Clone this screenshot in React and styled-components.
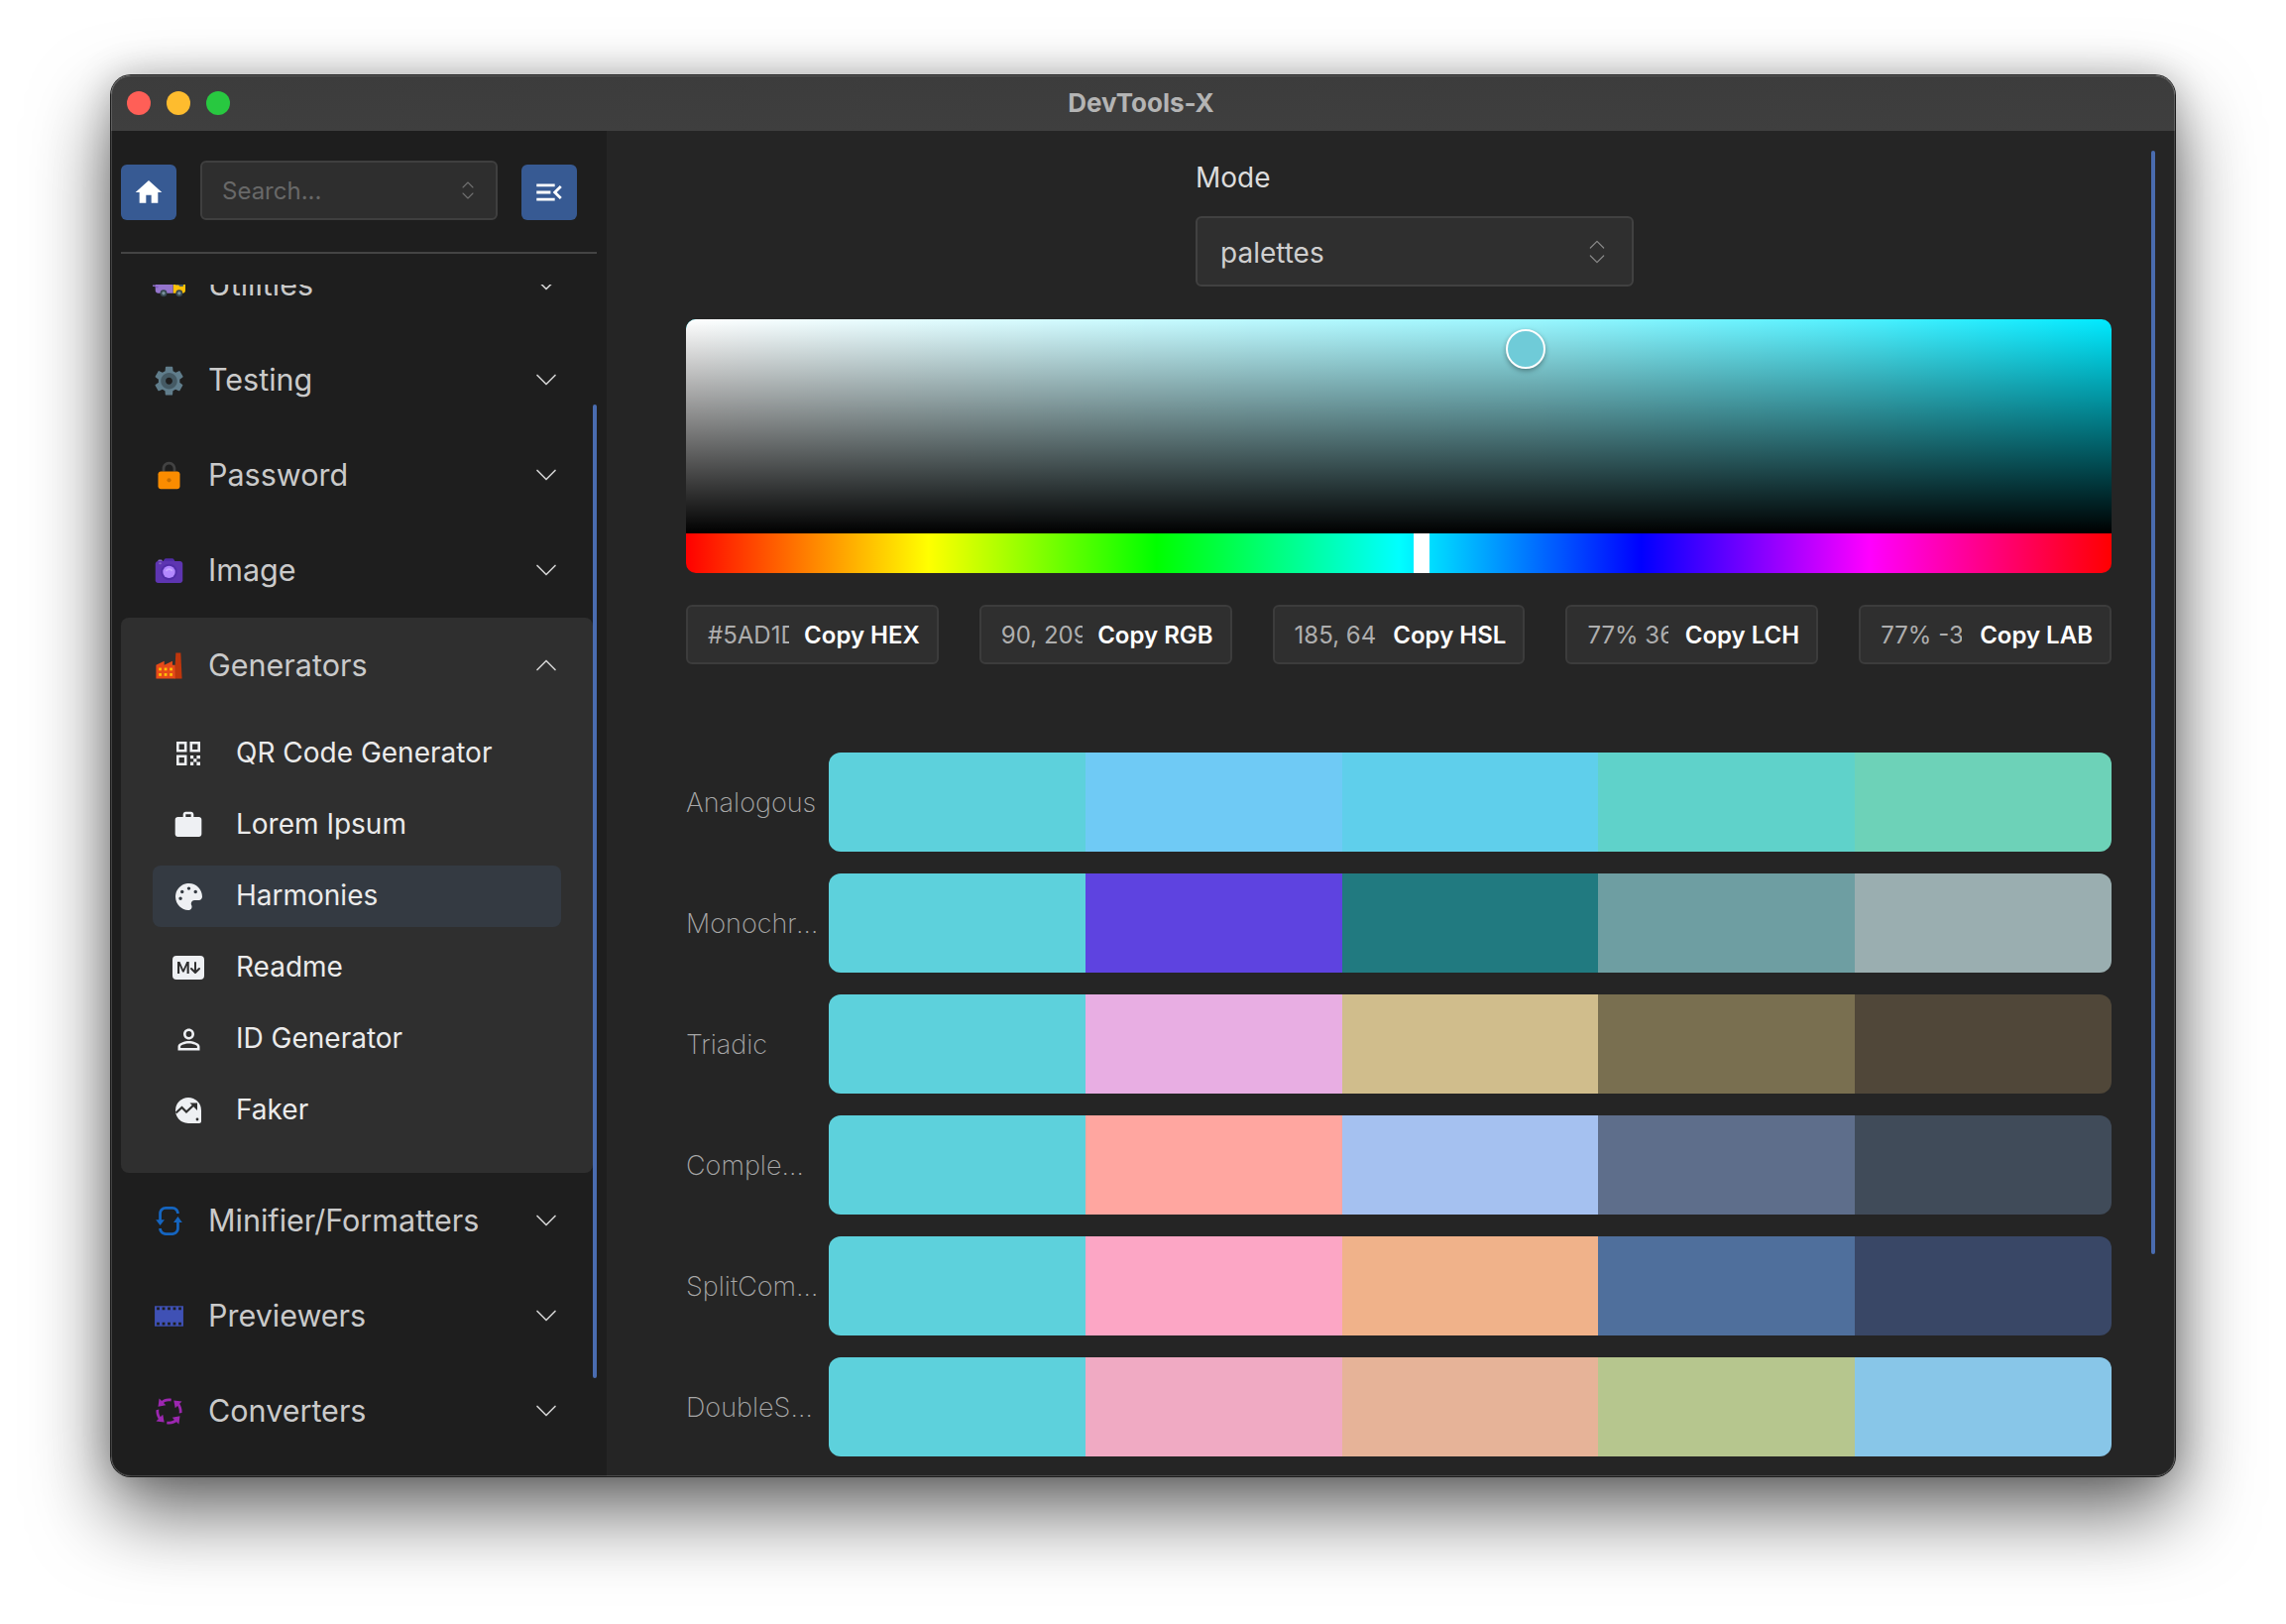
import React from "react";
import styled, { createGlobalStyle } from "styled-components";
import {
  FcInTransit,
  FcSettings,
  FcLock,
  FcCamera,
  FcFactory,
  FcRefresh,
  FcFilm,
  FcProcess,
} from "react-icons/fc";
import { MdHome, MdMenuOpen, MdWork, MdOutlinePersonOutline } from "react-icons/md";
import { FaPalette } from "react-icons/fa";
import { BsMarkdownFill } from "react-icons/bs";
import { ChevronDown, ChevronUp, ChevronsUpDown } from "lucide-react";

const GlobalStyle = createGlobalStyle`
  html, body {
    margin: 0;
    background: #fff;
    font-family: Inter, "Liberation Sans", sans-serif;
  }
  * {
    box-sizing: border-box;
  }
`;

const sections = [
  { name: "Utilities", icon: <FcInTransit /> },
  { name: "Testing", icon: <FcSettings /> },
  { name: "Password", icon: <FcLock /> },
  { name: "Image", icon: <FcCamera /> },
];

const lowerSections = [
  { name: "Minifier/Formatters", icon: <FcRefresh /> },
  { name: "Previewers", icon: <FcFilm /> },
  { name: "Converters", icon: <FcProcess /> },
];

const QrIcon = () => (
  <svg viewBox="0 0 24 24" width="24" height="24" fill="currentColor">
    <path fillRule="evenodd" d="M0 0h10.500v10.500H0zM2.600 2.600v5.300h5.300V2.600z" />
    <path fillRule="evenodd" d="M13.500 0H24v10.500H13.500zM16.100 2.600v5.300h5.300V2.600z" />
    <path fillRule="evenodd" d="M0 13.500h10.500V24H0zM2.600 16.100v5.300h5.300v-5.300z" />
    <path d="M14 14h3.200v3.200H14zM20.400 14H24v3.200h-3.600zM17.200 17.200h3.200v3.200h-3.200zM14 20.400h3.200V24H14zM20.400 20.400H24V24h-3.600z" />
  </svg>
);

const FakerIcon = () => (
  <svg viewBox="0 0 28 28" width="28" height="28">
    <path
      fill="currentColor"
      d="M14 1a13 13 0 0 0-13 13c0 5 2.800 9.400 7 11.600 1.800.9 3.800 1.400 6 1.400h11c1 0 2-.9 2-2V14A13 13 0 0 0 14 1z"
    />
    <path
      fill="none"
      stroke="#2f2f2f"
      strokeWidth="2.200"
      d="M1.500 16.500 7.500 11l4.500 4.500 8-7.500"
    />
    <path fill="#2f2f2f" d="M15.500 6.500h7.500V14z" />
    <circle cx="23" cy="23" r="1.400" fill="#2f2f2f" />
  </svg>
);

const generators = [
  { name: "QR Code Generator", icon: <QrIcon /> },
  { name: "Lorem Ipsum", icon: <MdWork size={32} /> },
  { name: "Harmonies", icon: <FaPalette size={27} />, active: true },
  { name: "Readme", icon: <BsMarkdownFill size={32} /> },
  { name: "ID Generator", icon: <MdOutlinePersonOutline size={33} /> },
  { name: "Faker", icon: <FakerIcon /> },
];

const values = [
  { value: "#5AD1DC", label: "Copy HEX" },
  { value: "90, 209, 220", label: "Copy RGB" },
  { value: "185, 64, 61", label: "Copy HSL" },
  { value: "77% 36 203", label: "Copy LCH" },
  { value: "77% -3 -24", label: "Copy LAB" },
];

const palettes = [
  { name: "Analogous", colors: ["#5dd1dc", "#6fcaf5", "#5fcfeb", "#5fd2ca", "#6dd2b8"] },
  { name: "Monochromatic", colors: ["#5dd1dc", "#5e43e0", "#217a80", "#6e9ea2", "#9aaeb0"] },
  { name: "Triadic", colors: ["#5dd1dc", "#e8aee3", "#d0bd8c", "#796f50", "#504739"] },
  { name: "Complementary", colors: ["#5dd1dc", "#ffa6a0", "#a5c1f0", "#5e6e8b", "#404b59"] },
  { name: "SplitComplementary", colors: ["#5dd1dc", "#fca6c5", "#f0b28a", "#4f6f9c", "#394766"] },
  { name: "DoubleSplitComplementary", colors: ["#5dd1dc", "#f0aac3", "#e6b398", "#b6c68e", "#88c6e8"] },
];

const SectionRow = ({ name, icon, open }) => (
  <Section>
    <SectionIcon>{icon}</SectionIcon>
    <SectionName>{name}</SectionName>
    <Chevron>{open ? <ChevronUp size={36} strokeWidth={1.1} /> : <ChevronDown size={36} strokeWidth={1.1} />}</Chevron>
  </Section>
);

export default function App() {
  return (
    <>
      <GlobalStyle />
      <Page>
        <Window>
          <TitleBar>
            <Lights>
              <Light $color="#ff5f57" />
              <Light $color="#febc2e" />
              <Light $color="#28c840" />
            </Lights>
            <Title>DevTools-X</Title>
          </TitleBar>
          <Body>
            <Sidebar>
              <Toolbar>
                <IconButton>
                  <MdHome size={32} />
                </IconButton>
                <SearchBox>
                  <SearchText>Search...</SearchText>
                  <ChevronsUpDown size={24} strokeWidth={1.1} />
                </SearchBox>
                <IconButton>
                  <MdMenuOpen size={34} />
                </IconButton>
              </Toolbar>
              <Divider />
              <NavClip>
                <NavList>
                  {sections.map((s) => (
                    <SectionRow key={s.name} {...s} />
                  ))}
                  <OpenPanel>
                    <SectionRow name="Generators" icon={<FcFactory />} open />
                    <SubList>
                      {generators.map((g) => (
                        <SubItem key={g.name} $active={g.active}>
                          <SubIcon>{g.icon}</SubIcon>
                          {g.name}
                        </SubItem>
                      ))}
                    </SubList>
                  </OpenPanel>
                  {lowerSections.map((s) => (
                    <SectionRow key={s.name} {...s} />
                  ))}
                </NavList>
              </NavClip>
              <SideThumb />
            </Sidebar>
            <Main>
              <ModeField>
                <ModeLabel>Mode</ModeLabel>
                <ModeSelect>
                  <ModeValue>palettes</ModeValue>
                  <ChevronsUpDown size={32} strokeWidth={0.9} />
                </ModeSelect>
              </ModeField>
              <Picker>
                <Saturation>
                  <SatThumb />
                </Saturation>
                <Hue>
                  <HueThumb />
                </Hue>
              </Picker>
              <ValueRow>
                {values.map((v) => (
                  <ValueBox key={v.label}>
                    <ValueInput>{v.value}</ValueInput>
                    <CopyLabel>{v.label}</CopyLabel>
                  </ValueBox>
                ))}
              </ValueRow>
              <PaletteList>
                {palettes.map((p) => (
                  <PaletteRow key={p.name}>
                    <PaletteName>{p.name}</PaletteName>
                    <Swatches>
                      {p.colors.map((c, i) => (
                        <Swatch key={i} $color={c} />
                      ))}
                    </Swatches>
                  </PaletteRow>
                ))}
              </PaletteList>
              <MainThumb />
            </Main>
          </Body>
        </Window>
      </Page>
    </>
  );
}

const Page = styled.div`
  width: 2306px;
  height: 1638px;
  padding: 76px 112px 0;
  background: #fff;
  overflow: hidden;
`;

const Window = styled.div`
  position: relative;
  width: 2082px;
  height: 1413px;
  display: flex;
  flex-direction: column;
  border-radius: 20px;
  overflow: hidden;
  box-shadow: 0 0 0 1px #1c1c1c, 0 36px 80px rgba(0, 0, 0, 0.6), 0 0 36px rgba(0, 0, 0, 0.22);

  &::after {
    content: "";
    position: absolute;
    inset: 0;
    border: 1.5px solid rgba(255, 255, 255, 0.17);
    border-radius: 20px;
    pointer-events: none;
  }
`;

const TitleBar = styled.div`
  height: 56px;
  flex: none;
  display: grid;
  grid-template-columns: 1fr auto 1fr;
  align-items: center;
  padding-left: 16px;
  background: linear-gradient(#3c3c3c, #3f3f3f);
`;

const Lights = styled.div`
  display: flex;
  gap: 16px;
`;

const Light = styled.span`
  width: 24px;
  height: 24px;
  border-radius: 50%;
  background: ${(p) => p.$color};
`;

const Title = styled.div`
  font-size: 26px;
  font-weight: 700;
  color: #b4b4b4;
  padding: 0 20px 2px 0;
`;

const Body = styled.div`
  flex: 1;
  min-height: 0;
  display: flex;
`;

const Sidebar = styled.aside`
  position: relative;
  width: 500px;
  flex: none;
  display: flex;
  flex-direction: column;
  padding: 30px 10px 0;
  background: #1e1e1e;
`;

const Toolbar = styled.div`
  display: flex;
  align-items: flex-end;
  gap: 24px;
  height: 60px;
  padding-right: 20px;
`;

const IconButton = styled.div`
  width: 56px;
  height: 56px;
  flex: none;
  display: flex;
  align-items: center;
  justify-content: center;
  border-radius: 6px;
  background: #375a93;
  color: #fff;
`;

const SearchBox = styled.div`
  width: 300px;
  height: 60px;
  flex: none;
  display: flex;
  align-items: center;
  justify-content: space-between;
  padding: 0 16px 0 20px;
  border: 2px solid #3f3f3f;
  border-radius: 6px;
  background: #2e2e2e;
  color: #707070;
`;

const SearchText = styled.span`
  font-size: 24px;
  color: #686868;
`;

const Divider = styled.div`
  height: 2px;
  margin: 32px 0 31px;
  background: #444;
`;

const NavClip = styled.div`
  flex: 1;
  min-height: 0;
  overflow: hidden;
`;

const NavList = styled.div`
  margin-top: -48px;
  width: 476px;
`;

const Section = styled.div`
  height: 96px;
  display: flex;
  align-items: center;
  padding: 0 29px 0 34px;
`;

const SectionIcon = styled.span`
  width: 28px;
  flex: none;
  display: flex;
  justify-content: center;
  margin-right: 26px;
  font-size: 33px;

  svg {
    flex: none;
  }
`;

const SectionName = styled.span`
  flex: 1;
  padding-bottom: 2px;
  font-size: 30.5px;
  color: #cacaca;
`;

const Chevron = styled.span`
  display: flex;
  color: #d2d2d2;
`;

const OpenPanel = styled.div`
  padding-bottom: 32px;
  border-radius: 8px;
  background: #2f2f2f;
`;

const SubList = styled.div`
  display: flex;
  flex-direction: column;
  gap: 10px;
  margin-top: 10px;
  padding: 0 32px;
`;

const SubItem = styled.div`
  height: 62px;
  display: flex;
  align-items: center;
  padding: 0 0 2px 20px;
  border-radius: 8px;
  font-size: 28px;
  color: #ebebeb;
  background: ${(p) => (p.$active ? "#343a42" : "transparent")};
`;

const SubIcon = styled.span`
  width: 32px;
  flex: none;
  display: flex;
  justify-content: center;
  margin: 2px 32px 0 0;
  color: #eef0f3;

  svg {
    flex: none;
  }
`;

const SideThumb = styled.div`
  position: absolute;
  top: 276px;
  right: 10px;
  width: 4px;
  height: 982px;
  border-radius: 2px;
  background: #4a6cb0;
`;

const Main = styled.main`
  position: relative;
  flex: 1;
  min-width: 0;
  overflow: hidden;
  padding: 30px 64px 0 80px;
  background: #252525;
`;

const ModeField = styled.div`
  width: 442px;
  margin-left: 514px;
`;

const ModeLabel = styled.div`
  font-size: 28px;
  line-height: 34px;
  color: #dcdcdc;
`;

const ModeSelect = styled.div`
  height: 71px;
  margin-top: 22px;
  display: flex;
  align-items: center;
  justify-content: space-between;
  padding: 0 19px 0 23px;
  border: 2px solid #414141;
  border-radius: 6px;
  background: #2f2f2f;
  font-size: 28px;
  color: #cfcfcf;

  svg {
    color: #8a8a8a;
  }
`;

const ModeValue = styled.span`
  padding-top: 2px;
`;

const Picker = styled.div`
  margin-top: 33px;
  border-radius: 10px;
  overflow: hidden;
`;

const Saturation = styled.div`
  position: relative;
  height: 216px;
  background: linear-gradient(0deg, #000, transparent),
    linear-gradient(
      90deg,
      #fff,
      rgba(255, 255, 255, 0.8) 30%,
      rgba(255, 255, 255, 0.6) 60%,
      rgba(255, 255, 255, 0.35) 80%,
      rgba(255, 255, 255, 0)
    ),
    #00eaff;
`;

const SatThumb = styled.span`
  position: absolute;
  left: 827px;
  top: 10px;
  width: 40px;
  height: 40px;
  border: 2px solid #fff;
  border-radius: 50%;
  background: #6fcbd8;
  box-shadow: 0 2px 5px rgba(0, 0, 0, 0.35);
`;

const Hue = styled.div`
  position: relative;
  height: 40px;
  background: linear-gradient(
    90deg,
    #f00 0%,
    #ff0 17%,
    #0f0 33%,
    #0ff 50%,
    #00f 67%,
    #f0f 83%,
    #f00 100%
  );
`;

const HueThumb = styled.span`
  position: absolute;
  left: 734px;
  top: 0;
  width: 16px;
  height: 40px;
  background: #fff;
`;

const ValueRow = styled.div`
  display: flex;
  gap: 41px;
  margin-top: 32px;
`;

const ValueBox = styled.div`
  flex: 1;
  min-width: 0;
  height: 60px;
  display: flex;
  align-items: center;
  padding: 0 17px 0 20px;
  border: 2px solid #3c3c3c;
  border-radius: 6px;
  background: #2f2f2f;
`;

const ValueInput = styled.span`
  width: 82px;
  flex: none;
  overflow: hidden;
  white-space: nowrap;
  font-size: 24px;
  color: #aeaeae;
`;

const CopyLabel = styled.span`
  margin-left: auto;
  font-size: 24px;
  font-weight: 600;
  color: #fff;
  white-space: nowrap;
`;

const PaletteList = styled.div`
  display: flex;
  flex-direction: column;
  gap: 22px;
  margin-top: 89px;
`;

const PaletteRow = styled.div`
  display: flex;
  align-items: center;
  gap: 8px;
`;

const PaletteName = styled.div`
  width: 136px;
  flex: none;
  overflow: hidden;
  white-space: nowrap;
  text-overflow: ellipsis;
  font-size: 27px;
  font-weight: 200;
  color: #a8a8a8;
`;

const Swatches = styled.div`
  flex: 1;
  height: 100px;
  display: flex;
  border-radius: 12px;
  overflow: hidden;
`;

const Swatch = styled.div`
  flex: 1;
  background: ${(p) => p.$color};
`;

const MainThumb = styled.div`
  position: absolute;
  top: 20px;
  right: 20px;
  width: 4px;
  height: 1113px;
  border-radius: 2px;
  background: #4a6cb0;
`;
